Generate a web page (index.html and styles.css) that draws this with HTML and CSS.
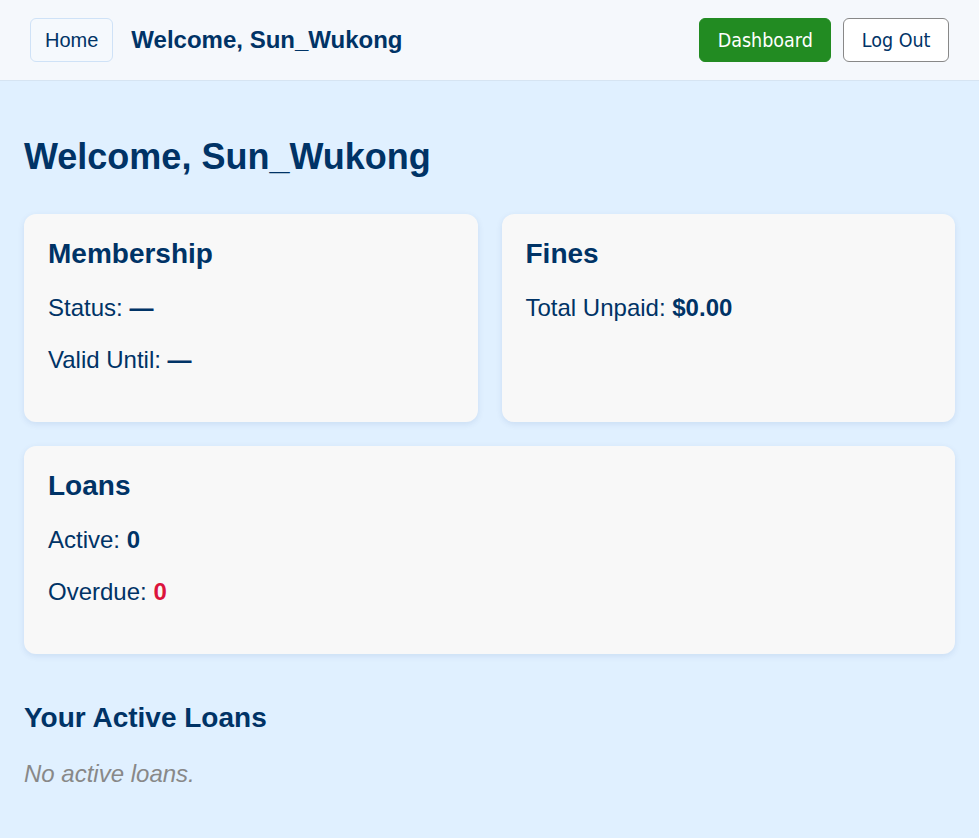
FILE: index.html
```html
<!DOCTYPE html>
<html lang="en">
<head>
<meta charset="utf-8">
<title>Dashboard</title>
<link rel="stylesheet" href="styles.css">
</head>
<body>
<header class="topbar">
  <div class="topbar-left">
    <a class="btn-home" href="#">Home</a>
    <span class="topbar-title">Welcome, Sun_Wukong</span>
  </div>
  <div class="topbar-right">
    <button class="btn btn-dash">Dashboard</button>
    <button class="btn btn-logout">Log Out</button>
  </div>
</header>
<main class="main">
  <h1 class="page-title">Welcome, Sun_Wukong</h1>
  <div class="card-grid">
    <section class="card">
      <h2 class="card-title">Membership</h2>
      <p class="line">Status: <strong>—</strong></p>
      <p class="line">Valid Until: <strong>—</strong></p>
    </section>
    <section class="card">
      <h2 class="card-title">Fines</h2>
      <p class="line">Total Unpaid: <strong>$0.00</strong></p>
    </section>
    <section class="card card-wide">
      <h2 class="card-title">Loans</h2>
      <p class="line">Active: <strong>0</strong></p>
      <p class="line">Overdue: <strong class="danger">0</strong></p>
    </section>
  </div>
  <h2 class="section-title">Your Active Loans</h2>
  <p class="empty">No active loans.</p>
</main>
</body>
</html>
```

FILE: styles.css
```css
html, body {
  margin: 0;
  padding: 0;
}
body {
  background: #e0f0ff;
  font-family: "Liberation Sans", Arial, sans-serif;
  color: #003366;
  font-size: 24px;
}
.topbar {
  display: flex;
  justify-content: space-between;
  align-items: center;
  padding: 18px 30px;
  background: #f5f8fc;
  border-bottom: 1px solid #d6e4f2;
}
.topbar-left, .topbar-right {
  display: flex;
  align-items: center;
}
.topbar-right {
  gap: 12px;
}
.btn-home {
  display: flex;
  align-items: center;
  box-sizing: border-box;
  height: 44px;
  font-size: 20px;
  padding: 0 14px;
  color: #003366;
  text-decoration: none;
  border: 1px solid #cfe2f7;
  border-radius: 6px;
  background: #f5f9fd;
}
.topbar-title {
  margin-left: 18px;
  font-size: 24px;
  font-weight: bold;
}
.btn {
  box-sizing: border-box;
  height: 44px;
  font-family: "DejaVu Sans Condensed", "DejaVu Sans", sans-serif;
  font-size: 19.5px;
  padding: 0 17.5px;
  border-radius: 6px;
  cursor: pointer;
}
.btn-dash {
  background: #228b22;
  color: #fff;
  border: 1px solid #228b22;
}
.btn-logout {
  background: #fff;
  color: #003366;
  border: 1px solid #888;
}
.main {
  padding: 34px 24px 24px;
}
.page-title {
  font-size: 36px;
  margin: 21px 0 37px;
  line-height: 41px;
}
.card-grid {
  display: grid;
  grid-template-columns: 1fr 1fr;
  gap: 24px;
}
.card {
  background: #f8f8f8;
  border-radius: 12px;
  padding: 24px;
  box-shadow: 0 2px 6px rgba(0, 60, 140, 0.10);
}
.card-wide {
  grid-column: 1 / span 2;
}
.card-title {
  font-size: 28px;
  line-height: 32px;
  margin: 0 0 24px;
}
.line {
  margin: 24px 0;
  line-height: 28px;
}
.line:last-child {
  margin-bottom: 24px;
}
.danger {
  color: #dc143c;
}
.section-title {
  font-size: 28px;
  line-height: 32px;
  margin: 48px 0 26px;
}
.empty {
  margin: 0;
  font-style: italic;
  color: #888;
  line-height: 28px;
}
```
